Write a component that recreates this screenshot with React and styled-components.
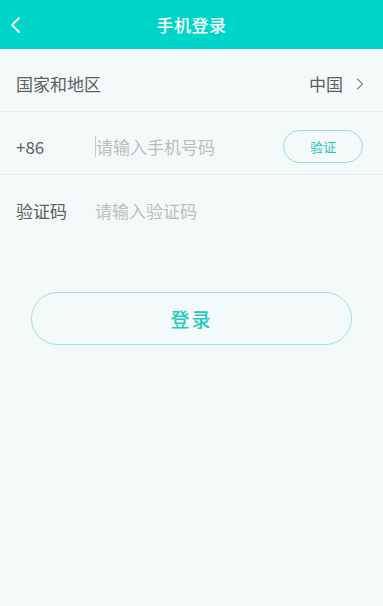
import React from "react";
import styled, { createGlobalStyle } from "styled-components";

const Global = createGlobalStyle`
  html, body { margin: 0; padding: 0; background: #f4fafa; }
  body { font-family: "Noto Sans CJK SC", "Noto Sans", sans-serif; }
  * { box-sizing: border-box; }
`;

const Page = styled.div`
  width: 383px;
  min-height: 606px;
  background: #f4fafa;
  display: flex;
  flex-direction: column;
`;

const Header = styled.header`
  height: 49px;
  background: #00d5c9;
  display: grid;
  grid-template-columns: 48px 1fr 48px;
  align-items: center;
`;

const Back = styled.button`
  border: 0;
  background: transparent;
  padding: 0 0 0 9px;
  height: 49px;
  display: flex;
  align-items: center;
`;

const Title = styled.h1`
  margin: 0;
  text-align: center;
  color: #fff;
  font-size: 17px;
  font-weight: 500;
  letter-spacing: 0.5px;
`;

const Form = styled.div`
  display: flex;
  flex-direction: column;
`;

const Row = styled.div`
  height: 63px;
  display: flex;
  align-items: center;
  padding: 7px ${(p) => (p.$tight ? "18px" : "20px")} 0 16px;
  border-bottom: ${(p) => (p.$divider ? "1px solid #e8eeee" : "none")};
`;

const Label = styled.span`
  width: 79px;
  flex: none;
  white-space: nowrap;
  color: #5a5f5f;
  font-size: 17px;
`;

const Value = styled.span`
  margin-left: auto;
  color: #5a5f5f;
  font-size: 17px;
  display: flex;
  align-items: center;
  gap: 12px;
`;

const Input = styled.input`
  flex: 1;
  min-width: 0;
  border: 0;
  border-left: ${(p) => (p.$caret ? "1px solid #c8cccc" : "0")};
  padding: 0;
  height: 21px;
  background: transparent;
  font-family: inherit;
  font-size: 17px;
  color: #333;
  outline: none;
  &::placeholder { color: #b9bebe; }
`;

const VerifyButton = styled.button`
  flex: none;
  width: 80px;
  height: 33px;
  margin-top: -1px;
  border: 1px solid #9fd8d0;
  border-radius: 17px;
  background: transparent;
  color: #22c7bb;
  font-family: inherit;
  font-size: 13px;
`;

const LoginWrap = styled.div`
  padding: 54px 31px 0 31px;
`;

const LoginButton = styled.button`
  width: 321px;
  height: 53px;
  border: 1px solid #a6ded6;
  border-radius: 27px;
  background: transparent;
  color: #25c9bd;
  font-family: inherit;
  font-size: 19px;
  font-weight: 500;
  letter-spacing: 2px;
`;

export default function App() {
  return (
    <>
      <Global />
      <Page>
        <Header>
          <Back aria-label="返回">
            <svg width="14" height="20" viewBox="0 0 14 20">
              <path d="M10 3 L3 10 L10 17" fill="none" stroke="#fff" strokeWidth="1.8" strokeLinecap="round" strokeLinejoin="round" />
            </svg>
          </Back>
          <Title>手机登录</Title>
          <span />
        </Header>
        <Form>
          <Row $divider $tight>
            <Label>国家和地区</Label>
            <Value>
              中国
              <svg width="10" height="14" viewBox="0 0 10 14">
                <path d="M2.5 2 L7.5 7 L2.5 12" fill="none" stroke="#888" strokeWidth="1.2" strokeLinecap="round" strokeLinejoin="round" />
              </svg>
            </Value>
          </Row>
          <Row $divider>
            <Label>+86</Label>
            <Input $caret placeholder="请输入手机号码" />
            <VerifyButton>验证</VerifyButton>
          </Row>
          <Row>
            <Label>验证码</Label>
            <Input placeholder="请输入验证码" />
          </Row>
        </Form>
        <LoginWrap>
          <LoginButton>登录</LoginButton>
        </LoginWrap>
      </Page>
    </>
  );
}
